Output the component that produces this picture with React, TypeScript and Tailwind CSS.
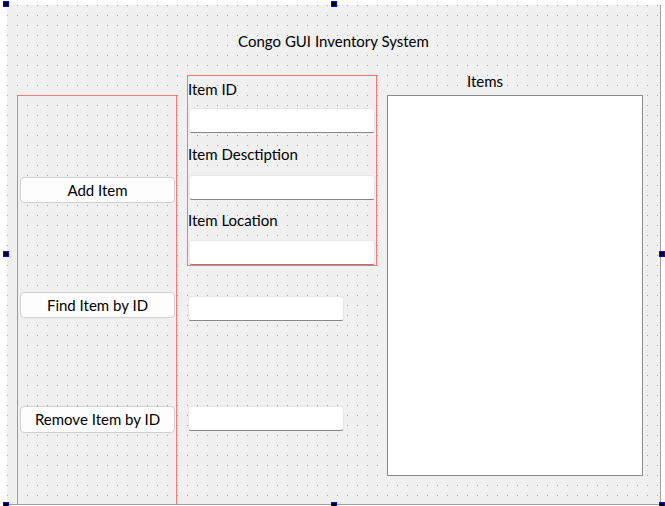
import React from "react";

const font = { fontFamily: "Lato, 'Noto Sans', sans-serif" };

function Handle({ cls }: { cls: string }) {
  return <div className={`absolute w-[6px] h-[6px] bg-black border border-[#0000ff] ${cls}`} />;
}

function Input({ cls }: { cls: string }) {
  return (
    <div
      className={`bg-white border border-[#e6e6e6] border-b-[#868686] rounded-[3px] h-[25px] ${cls}`}
    />
  );
}

function Button({ label, cls }: { label: string; cls: string }) {
  return (
    <div
      className={`h-[26px] w-[155px] ml-[2px] bg-[#fdfdfd] border border-[#d0d0d0] rounded-[4px] flex items-center justify-center text-[15px] text-black leading-none ${cls}`}
    >
      {label}
    </div>
  );
}

function Label({ text, cls }: { text: string; cls: string }) {
  return (
    <div className={`h-[20px] flex items-center text-[15px] text-black leading-none ${cls}`}>
      {text}
    </div>
  );
}

export default function App() {
  return (
    <div className="relative w-[665px] h-[506px] bg-white overflow-hidden" style={font}>
      <div className="ml-[7px] pt-[5px]">
        <div className="relative w-[654px] h-[500px] bg-[#f0f0f0] border-r border-b border-[#a0a0a0] overflow-hidden">
          <svg className="absolute inset-0" width="653" height="499">
            <defs>
              <pattern id="dots" width="10" height="10" patternUnits="userSpaceOnUse">
                <rect x="0" y="0" width="1" height="1" fill="#a3a3a3" />
              </pattern>
            </defs>
            <rect width="653" height="499" fill="url(#dots)" />
          </svg>
          <div className="relative flex flex-col">
            <div className="mt-[27px] h-[18px] flex items-center justify-center text-[15px] leading-none text-black">
              Congo GUI Inventory System
            </div>
            <div className="flex items-start">
              {/* left buttons column */}
              <div className="ml-[10px] mt-[45px] w-[160px] h-[409px] border-l border-r border-t border-[#f07878] flex flex-col">
                <Button label="Add Item" cls="mt-[81px]" />
                <Button label="Find Item by ID" cls="mt-[89px]" />
                <Button label="Remove Item by ID" cls="mt-[88px] h-[27px]" />
              </div>
              {/* middle column */}
              <div className="ml-[10px] mt-[25px] w-[190px] flex flex-col">
                <div className="h-[191px] border border-[#f07878] flex flex-col">
                  <Label text="Item ID" cls="mt-[3px]" />
                  <Input cls="mt-[9px] ml-[1px] w-[186px]" />
                  <Label text="Item Desctiption" cls="mt-[11px]" />
                  <Input cls="mt-[11px] ml-[1px] w-[186px]" />
                  <Label text="Item Location" cls="mt-[10px]" />
                  <Input cls="mt-[10px] ml-[1px] w-[186px]" />
                </div>
                <Input cls="mt-[30px] ml-[1px] w-[156px]" />
                <Input cls="mt-[85px] ml-[1px] w-[156px]" />
              </div>
              {/* items column */}
              <div className="ml-[10px] mt-[22px] w-[256px] flex flex-col">
                <div className="h-[18px] flex items-center text-[15px] leading-none text-black pl-[80px]">
                  Items
                </div>
                <div className="mt-[5px] h-[381px] bg-white border border-[#8c8c8c]" />
              </div>
            </div>
          </div>
        </div>
      </div>
      <Handle cls="left-[3px] top-[1px]" />
      <Handle cls="left-[331px] top-[1px]" />
      <Handle cls="left-[3px] top-[251px]" />
      <Handle cls="left-[659px] top-[251px]" />
      <Handle cls="left-[3px] top-[502px]" />
      <Handle cls="left-[331px] top-[502px]" />
      <Handle cls="left-[659px] top-[502px]" />
    </div>
  );
}
